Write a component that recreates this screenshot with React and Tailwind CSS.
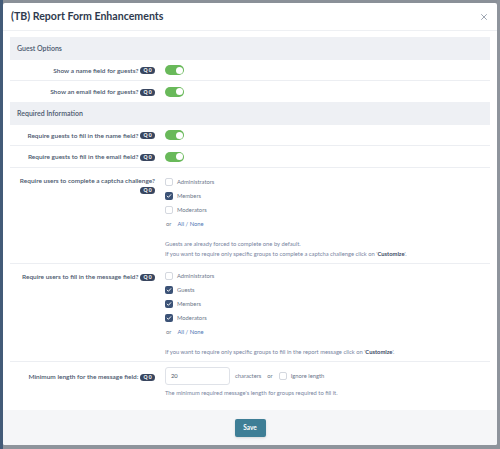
import React from 'react'
import { X } from 'lucide-react'

const Badge = () => (
  <span className="inline-flex items-center justify-center h-[7px] w-[15px] rounded-full bg-[#39465f] text-white text-[5px] font-bold leading-none align-middle">
    Q 0
  </span>
)

const Toggle = () => (
  <div className="w-[19px] h-[10px] rounded-full bg-[#69b95a] flex items-center justify-end pr-[1.5px]">
    <div className="w-[7px] h-[7px] rounded-full bg-white" />
  </div>
)

const Check = ({ on, label }) => (
  <div className="flex items-center gap-[4px] h-[14px]">
    {on ? (
      <span className="w-[8px] h-[8px] rounded-[2px] bg-[#3b5276] flex items-center justify-center">
        <svg viewBox="0 0 10 10" className="w-[6px] h-[6px]"><path d="M2 5.2l2 2 4-4.4" stroke="#fff" strokeWidth="1.6" fill="none" strokeLinecap="round" strokeLinejoin="round" /></svg>
      </span>
    ) : (
      <span className="w-[8px] h-[8px] rounded-[2px] bg-white border border-[#d4d8df]" />
    )}
    <span className="text-[5.8px] text-[#6c778a]">{label}</span>
  </div>
)

const AllNone = () => (
  <div className="flex items-center h-[14px] text-[5.8px]">
    <span className="text-[#6c778a] ml-[1px] mr-[6px]">or</span>
    <span className="text-[#4f77b5]">All / None</span>
  </div>
)

const Row = ({ label, children, className = '', labelClass = '' }) => (
  <div className={`flex border-b border-[#eceef2] ${className}`}>
    <div className={`w-[150px] pr-[5px] text-right text-[6.5px] font-semibold text-[#48556b] leading-[9px] ${labelClass}`}>
      {label}
    </div>
    <div className="flex-1 pl-[5px]">{children}</div>
  </div>
)

const Section = ({ title }) => (
  <div className="h-[23px] bg-[#eef0f4] flex items-center px-[7px] text-[7px] font-semibold text-[#4a586e]">{title}</div>
)

export default function App() {
  return (
    <div className="w-[500px] h-[449px] bg-[#8e949c] flex overflow-hidden" style={{ fontFamily: 'Lato, "Open Sans", sans-serif' }}>
      <div className="w-[3px] h-full bg-[#435b78]" />
      <div className="flex flex-col">
        <div className="h-[3px] bg-[#8a9098]" />
        <div className="w-[494px] h-[442px] bg-white rounded-[2px] flex flex-col">
          <div className="h-[28px] flex items-center justify-between pl-[8px] pr-[8px] border-b border-[#eef0f3]">
            <span className="text-[10.6px] font-bold text-[#2f3a4e]">(TB) Report Form Enhancements</span>
            <X size={10} strokeWidth={1.6} className="text-[#6d788b]" />
          </div>
          <div className="px-[7px] pt-[6px] flex-1">
            <Section title="Guest Options" />
            <Row label={<>Show a name field for guests? <Badge /></>} className="h-[21px] items-center">
              <Toggle />
            </Row>
            <Row label={<>Show an email field for guests? <Badge /></>} className="h-[21px] items-center border-b-0">
              <Toggle />
            </Row>
            <Section title="Required Information" />
            <Row label={<>Require guests to fill in the name field? <Badge /></>} className="h-[21px] items-center">
              <Toggle />
            </Row>
            <Row label={<>Require guests to fill in the email field? <Badge /></>} className="h-[22px] items-center">
              <Toggle />
            </Row>
            <Row label={<>Require users to complete a captcha challenge?<br /><Badge /></>} className="pt-[7px] pb-[4px]" labelClass="pt-[1px]">
              <Check label="Administrators" />
              <Check on label="Members" />
              <Check label="Moderators" />
              <AllNone />
              <div className="mt-[8px] text-[5.8px] leading-[10px] text-[#7784a0]">
                <div>Guests are already forced to complete one by default.</div>
                <div>If you want to require only specific groups to complete a captcha challenge click on '<b className="text-[#3d4b66]">Customize</b>'.</div>
              </div>
            </Row>
            <Row label={<>Require users to fill in the message field? <Badge /></>} className="pt-[5px] pb-[4px]" labelClass="pt-[3px]">
              <Check label="Administrators" />
              <Check on label="Guests" />
              <Check on label="Members" />
              <Check on label="Moderators" />
              <AllNone />
              <div className="mt-[8px] text-[5.8px] leading-[10px] text-[#7784a0]">
                If you want to require only specific groups to fill in the report message click on '<b className="text-[#3d4b66]">Customize</b>'.
              </div>
            </Row>
            <Row label={<>Minimum length for the message field: <Badge /></>} className="pt-[5px] border-b-0" labelClass="pt-[5px]">
              <div className="flex items-center gap-[4px]">
                <div className="w-[65px] h-[18px] border border-[#dfe2e8] rounded-[3px] flex items-center px-[5px] text-[5.8px] text-[#4a5568]">20</div>
                <span className="text-[5.8px] text-[#6c778a] ml-[1px]">characters</span>
                <span className="text-[5.8px] text-[#6c778a] ml-[2px]">or</span>
                <span className="w-[8px] h-[8px] rounded-[2px] bg-white border border-[#d4d8df] ml-[2px]" />
                <span className="text-[5.8px] text-[#6c778a]">Ignore length</span>
              </div>
              <div className="mt-[3px] text-[5.8px] leading-[10px] text-[#7784a0]">The minimum required message's length for groups required to fill it.</div>
            </Row>
          </div>
          <div className="h-[35px] bg-[#f5f6f8] flex items-center justify-center rounded-b-[2px]">
            <button className="w-[31px] h-[18px] rounded-[2px] bg-[#3e7e96] text-white text-[6.5px] font-bold shadow-sm">Save</button>
          </div>
        </div>
      </div>
    </div>
  )
}
